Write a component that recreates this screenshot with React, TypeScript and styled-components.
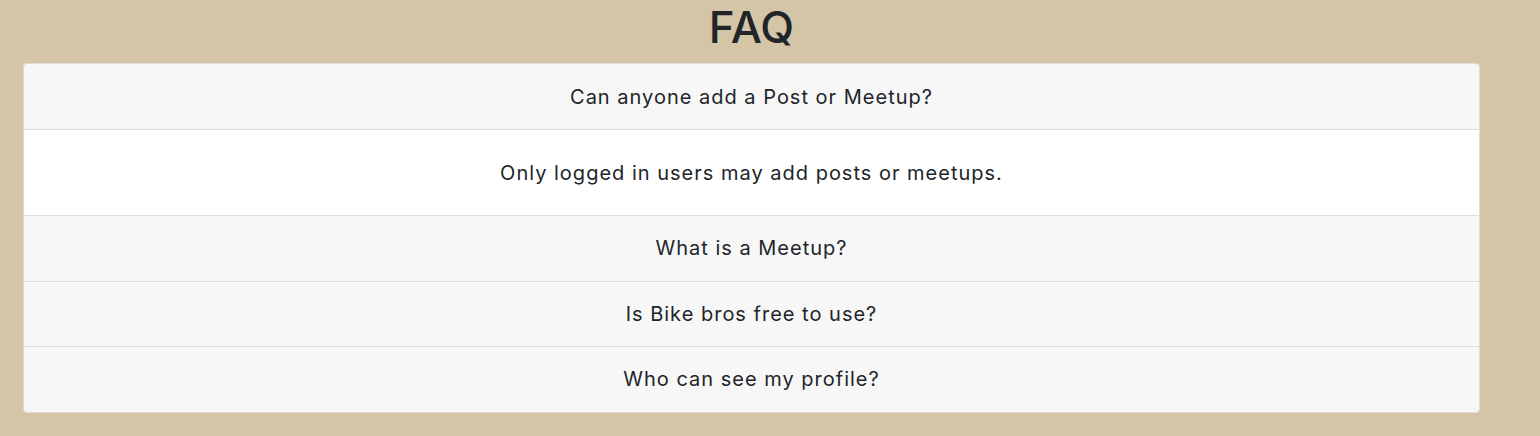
import { useState } from 'react'
import styled, { createGlobalStyle } from 'styled-components'

const GlobalStyle = createGlobalStyle`
  body {
    margin: 0;
    background: #d3c5a5;
    font-family: Inter, "Noto Sans", sans-serif;
    color: #212529;
  }
`

const Page = styled.div`
  padding: 0 60px 0 23px;
  min-height: 436px;
  box-sizing: border-box;
`

const Title = styled.h1`
  margin: 0;
  height: 63px;
  line-height: 55px;
  text-align: center;
  font-size: 44px;
  font-weight: 500;
`

const Card = styled.div`
  background: #f7f7f7;
  border: 1px solid #dcdcdc;
  border-radius: 4px;
  overflow: hidden;
`

const Question = styled.div<{ $first?: boolean }>`
  height: ${p => (p.$first ? '65px' : '64.5px')};
  display: flex;
  align-items: center;
  justify-content: center;
  font-size: 20px;
  letter-spacing: 1px;
  cursor: pointer;
  border-top: ${p => (p.$first ? 'none' : '1px solid #dcdcdc')};
`

const Answer = styled.div`
  height: 85px;
  display: flex;
  align-items: center;
  justify-content: center;
  font-size: 20px;
  letter-spacing: 1px;
  background: #fff;
  border-top: 1px solid #dcdcdc;
`

const faqs = [
  { q: 'Can anyone add a Post or Meetup?', a: 'Only logged in users may add posts or meetups.' },
  { q: 'What is a Meetup?', a: 'A Meetup is a planned ride that other users can join.' },
  { q: 'Is Bike bros free to use?', a: 'Yes, Bike bros is completely free.' },
  { q: 'Who can see my profile?', a: 'Only logged in users can see your profile.' },
]

const App = () => {
  const [open, setOpen] = useState<number | null>(0)
  return (
    <Page>
      <GlobalStyle />
      <Title>FAQ</Title>
      <Card>
        {faqs.map((f, i) => (
          <div key={f.q}>
            <Question $first={i === 0} onClick={() => setOpen(open === i ? null : i)}>
              {f.q}
            </Question>
            {open === i && <Answer>{f.a}</Answer>}
          </div>
        ))}
      </Card>
    </Page>
  )
}

export default App
